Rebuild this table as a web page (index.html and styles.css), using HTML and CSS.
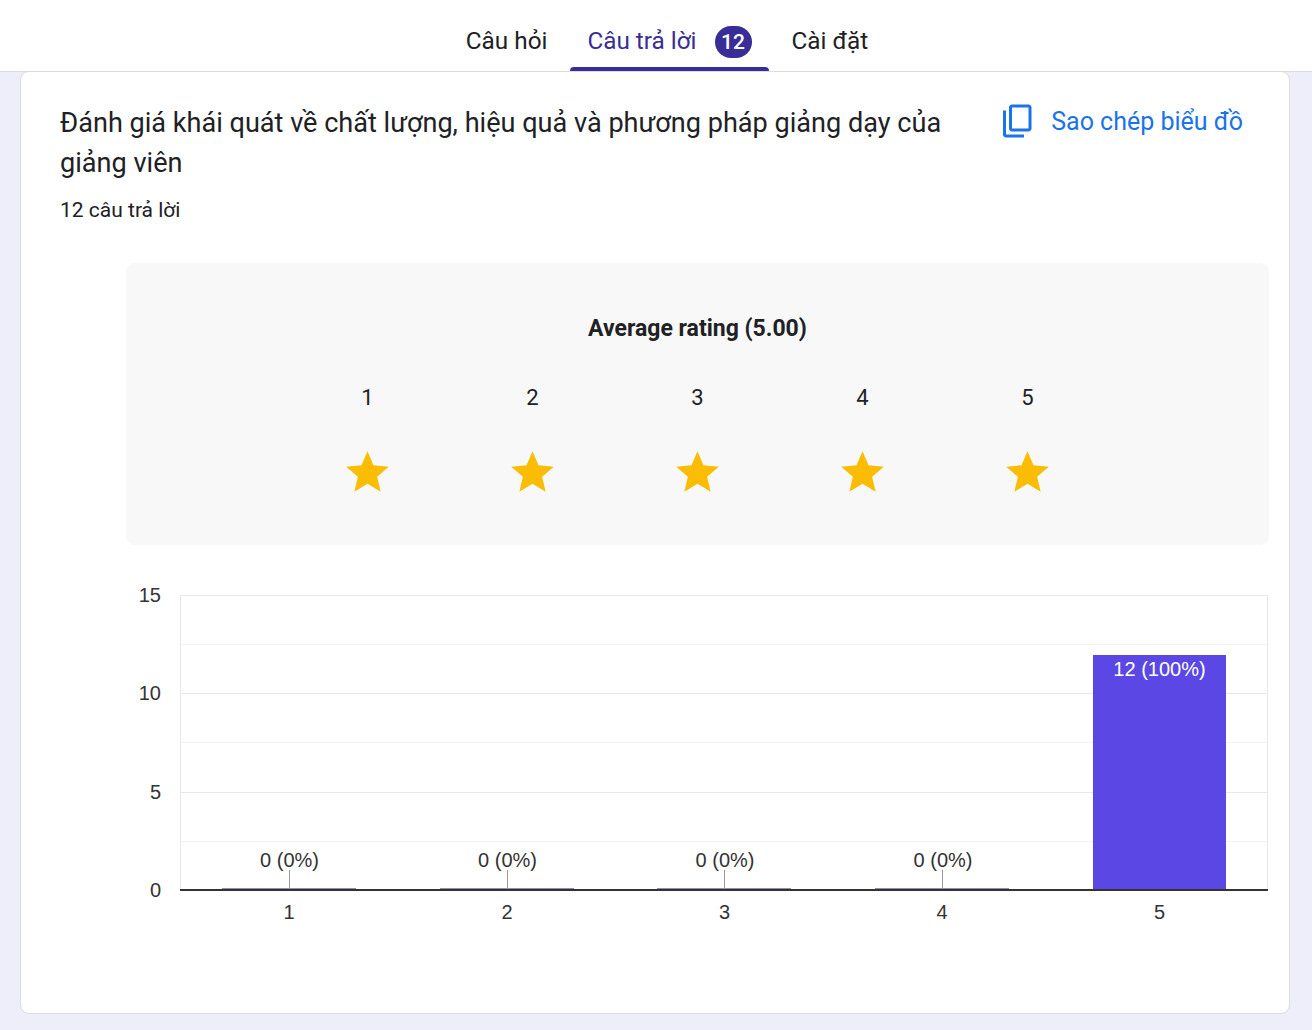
FILE: index.html
```html
<!DOCTYPE html>
<html lang="vi">
<head>
<meta charset="utf-8">
<title>Câu trả lời</title>
<link rel="stylesheet" href="styles.css">
</head>
<body>
<header class="topbar">
  <nav class="tabs">
    <div class="tab">
      <span class="tab-label">Câu hỏi</span>
      <span class="tab-line"></span>
    </div>
    <div class="tab active">
      <span class="tab-label">Câu trả lời <span class="badge">12</span></span>
      <span class="tab-line"></span>
    </div>
    <div class="tab">
      <span class="tab-label">Cài đặt</span>
      <span class="tab-line"></span>
    </div>
  </nav>
</header>
<main class="card">
  <div class="card-head">
    <div class="question">
      <div class="q-title">Đánh giá khái quát về chất lượng, hiệu quả và phương pháp giảng dạy của giảng viên</div>
      <div class="q-count">12 câu trả lời</div>
    </div>
    <button class="copy-btn" type="button">
      <svg class="copy-icon" viewBox="0 0 24 24" width="36" height="36" aria-hidden="true">
        <path fill-rule="evenodd" d="M8 1h11c1.1 0 2 .9 2 2v14c0 1.1-.9 2-2 2H8c-1.1 0-2-.9-2-2V3c0-1.1.9-2 2-2zm0 2v14h11V3H8z"/>
        <path d="M2 5h2v16h12v2H4c-1.1 0-2-.9-2-2V5z"/>
      </svg>
      <span>Sao chép biểu đồ</span>
    </button>
  </div>

  <section class="rating-panel">
    <div class="avg">Average rating (5.00)</div>
    <div class="scale">
      <div class="scale-item"><span class="num">1</span><svg class="star" viewBox="0 0 24 24" width="51" height="51"><path d="M12 17.27L18.18 21l-1.64-7.03L22 9.24l-7.19-.61L12 2 9.19 8.63 2 9.24l5.46 4.73L5.82 21z"/></svg></div>
      <div class="scale-item"><span class="num">2</span><svg class="star" viewBox="0 0 24 24" width="51" height="51"><path d="M12 17.27L18.18 21l-1.64-7.03L22 9.24l-7.19-.61L12 2 9.19 8.63 2 9.24l5.46 4.73L5.82 21z"/></svg></div>
      <div class="scale-item"><span class="num">3</span><svg class="star" viewBox="0 0 24 24" width="51" height="51"><path d="M12 17.27L18.18 21l-1.64-7.03L22 9.24l-7.19-.61L12 2 9.19 8.63 2 9.24l5.46 4.73L5.82 21z"/></svg></div>
      <div class="scale-item"><span class="num">4</span><svg class="star" viewBox="0 0 24 24" width="51" height="51"><path d="M12 17.27L18.18 21l-1.64-7.03L22 9.24l-7.19-.61L12 2 9.19 8.63 2 9.24l5.46 4.73L5.82 21z"/></svg></div>
      <div class="scale-item"><span class="num">5</span><svg class="star" viewBox="0 0 24 24" width="51" height="51"><path d="M12 17.27L18.18 21l-1.64-7.03L22 9.24l-7.19-.61L12 2 9.19 8.63 2 9.24l5.46 4.73L5.82 21z"/></svg></div>
    </div>
  </section>

  <svg class="chart" viewBox="126 575 1143 370" width="1143" height="370">
    <g class="grid-minor">
      <line x1="180" y1="644.5" x2="1268" y2="644.5"/>
      <line x1="180" y1="742.5" x2="1268" y2="742.5"/>
      <line x1="180" y1="841.5" x2="1268" y2="841.5"/>
    </g>
    <g class="grid-major">
      <line x1="180" y1="595.5" x2="1268" y2="595.5"/>
      <line x1="180" y1="693.5" x2="1268" y2="693.5"/>
      <line x1="180" y1="792.5" x2="1268" y2="792.5"/>
      <line x1="180.5" y1="595" x2="180.5" y2="890"/>
      <line x1="1267.5" y1="595" x2="1267.5" y2="890"/>
    </g>
    <g class="zero-bars">
      <rect x="222" y="888" width="134" height="1"/>
      <rect x="440" y="888" width="134" height="1"/>
      <rect x="657" y="888" width="134" height="1"/>
      <rect x="875" y="888" width="134" height="1"/>
    </g>
    <rect class="bar" x="1093" y="655" width="133" height="235"/>
    <g class="ticks">
      <line x1="289.5" y1="870" x2="289.5" y2="889"/>
      <line x1="507.5" y1="870" x2="507.5" y2="889"/>
      <line x1="724.5" y1="870" x2="724.5" y2="889"/>
      <line x1="942.5" y1="870" x2="942.5" y2="889"/>
    </g>
    <line class="baseline" x1="180" y1="890" x2="1268" y2="890"/>
    <g class="axis-y">
      <text x="161" y="602">15</text>
      <text x="161" y="700">10</text>
      <text x="161" y="799">5</text>
      <text x="161" y="897">0</text>
    </g>
    <g class="axis-x">
      <text x="289" y="919">1</text>
      <text x="507" y="919">2</text>
      <text x="724.5" y="919">3</text>
      <text x="942" y="919">4</text>
      <text x="1159.5" y="919">5</text>
    </g>
    <g class="val">
      <text x="289.5" y="867">0 (0%)</text>
      <text x="507.5" y="867">0 (0%)</text>
      <text x="725" y="867">0 (0%)</text>
      <text x="943" y="867">0 (0%)</text>
      <text class="val-in" x="1159.5" y="676">12 (100%)</text>
    </g>
  </svg>
</main>
</body>
</html>
```

FILE: styles.css
```css
* {
  box-sizing: border-box;
}

html, body {
  margin: 0;
  padding: 0;
}

body {
  background: #eeedfa;
  font-family: Roboto, "Noto Sans", "Liberation Sans", sans-serif;
  color: #202124;
  height: 1030px;
  overflow: hidden;
}

/* ---------- top bar ---------- */
.topbar {
  background: #ffffff;
  height: 72px;
  border-bottom: 1px solid #dadce0;
}

.tabs {
  display: flex;
  justify-content: center;
  gap: 6px;
  padding-left: 22px;
  height: 71px;
}

.tab {
  display: flex;
  flex-direction: column;
  height: 71px;
}

.tab-label {
  flex: 1;
  display: flex;
  align-items: center;
  padding: 14px 17px 0 17px;
  font-size: 24.3px;
  line-height: 32px;
  color: #202124;
  white-space: nowrap;
}

.tab.active .tab-label {
  color: #392d97;
}

.badge {
  display: inline-flex;
  align-items: center;
  justify-content: center;
  min-width: 37px;
  height: 32px;
  margin-left: 18px;
  margin-top: 2px;
  border-radius: 16px;
  background: #392d97;
  color: #ffffff;
  font-size: 21px;
  font-weight: 500;
}

.tab-line {
  height: 4px;
  border-radius: 4px 4px 0 0;
  background: transparent;
}

.tab.active .tab-line {
  background: #392d97;
}

/* ---------- card ---------- */
.card {
  background: #ffffff;
  margin: -1px 22px 0 20px;
  border: 1px solid #dadce0;
  border-radius: 9px;
  padding: 0 0 68px 0;
}

.card-head {
  display: flex;
  align-items: flex-start;
  padding: 31px 39px 0 39px;
}

.question {
  flex: 1;
  padding-right: 28px;
}

.q-title {
  font-size: 27.1px;
  line-height: 40px;
  color: #202124;
}

.q-count {
  margin-top: 15px;
  font-size: 21px;
  line-height: 24px;
  color: #202124;
}

.copy-btn {
  display: flex;
  align-items: center;
  gap: 15px;
  margin-top: -2px;
  margin-right: 7px;
  padding: 0;
  height: 40px;
  border: 0;
  background: transparent;
  font-family: Roboto, "Noto Sans", sans-serif;
  font-size: 25px;
  color: #1a73e8;
  cursor: pointer;
}

.copy-icon {
  fill: #1a73e8;
  flex: none;
}

/* ---------- rating panel ---------- */
.rating-panel {
  margin: 41px 20px 0 105px;
  height: 282px;
  background: #f8f8f8;
  border-radius: 9px;
  padding-top: 52px;
  display: flex;
  flex-direction: column;
  align-items: center;
}

.avg {
  font-size: 23px;
  line-height: 28px;
  font-weight: 700;
  color: #202124;
}

.scale {
  display: flex;
  margin-top: 41px;
}

.scale-item {
  width: 165px;
  display: flex;
  flex-direction: column;
  align-items: center;
}

.num {
  font-size: 22px;
  line-height: 28px;
  color: #202124;
}

.star {
  display: block;
  margin-top: 35px;
  fill: #fbbc04;
}

/* ---------- chart ---------- */
.chart {
  display: block;
  margin: 30px 0 0 105px;
  font-family: "Liberation Sans", Arial, sans-serif;
}

.grid-minor line {
  stroke: #f3f3f3;
  stroke-width: 1;
}

.grid-major line {
  stroke: #e8e8e8;
  stroke-width: 1;
}

.zero-bars rect {
  fill: #8f8bbd;
}

.bar {
  fill: #5a47e4;
}

.ticks line {
  stroke: #999999;
  stroke-width: 1;
}

.baseline {
  stroke: #333333;
  stroke-width: 2;
}

.axis-y text {
  font-size: 20px;
  fill: #333333;
  text-anchor: end;
}

.axis-x text {
  font-size: 20px;
  fill: #333333;
  text-anchor: middle;
}

.val text {
  font-size: 20px;
  fill: #333333;
  text-anchor: middle;
}

.val .val-in {
  fill: #ffffff;
}
```
